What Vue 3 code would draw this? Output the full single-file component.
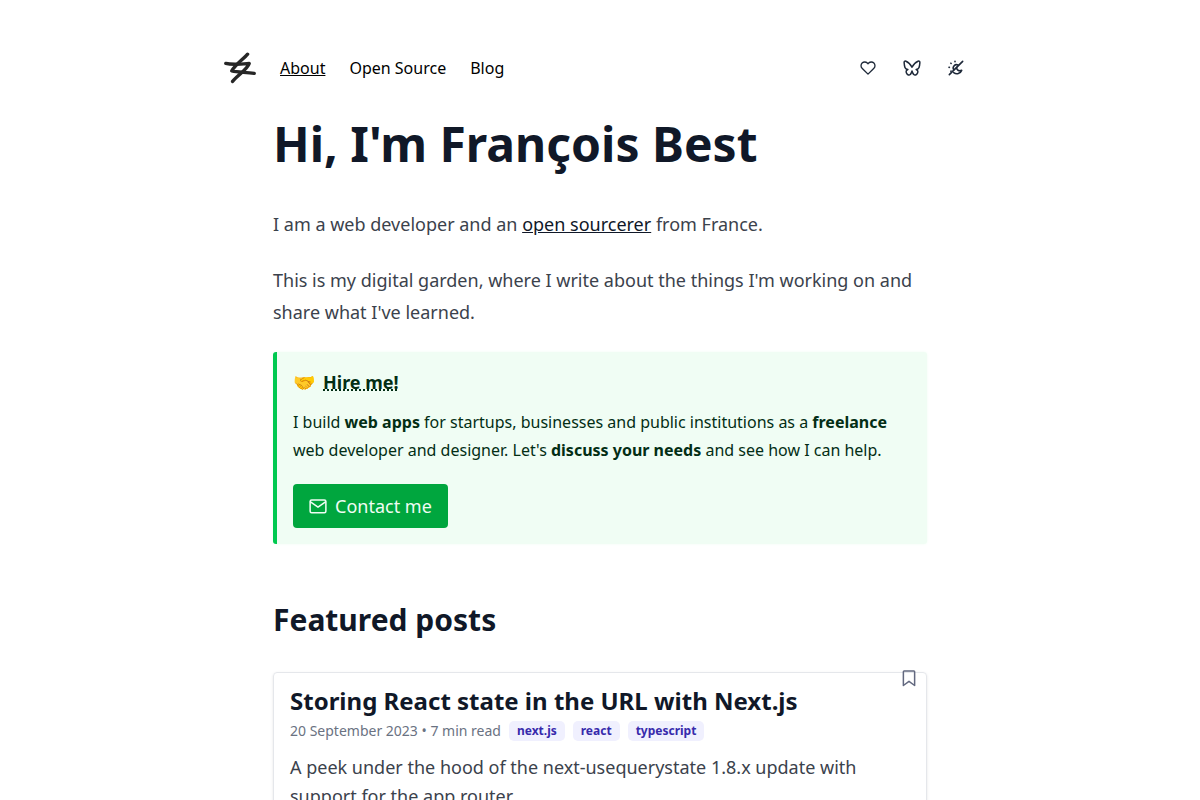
<script setup>
const links = [
  { label: 'About', href: '#about', active: true },
  { label: 'Open Source', href: '#open-source', active: false },
  { label: 'Blog', href: '#blog', active: false },
]
const post = {
  title: 'Storing React state in the URL with Next.js',
  meta: '20 September 2023 • 7 min read',
  tags: ['next.js', 'react', 'typescript'],
  summary: 'A peek under the hood of the next-usequerystate 1.8.x update with support for the app router.',
}
</script>

<template>
  <div class="page">
    <header class="header">
      <a class="logo" href="#home" aria-label="Home">
        <svg viewBox="0 0 32 32" width="32" height="32" fill="none" stroke="#262626" stroke-width="3.400" stroke-linecap="round" stroke-linejoin="round">
          <path d="M1.800 11.400C8 13 16 12.200 25.200 11.500C23.500 17 14.500 22.600 8.600 29.400" />
          <path d="M23.600 2.200C19.500 7 11.500 12.500 7.800 18.900C14 20.600 22 20 30.200 21.400" />
        </svg>
      </a>
      <nav class="nav">
        <a v-for="l in links" :key="l.label" :href="l.href" :class="{ active: l.active }">{{ l.label }}</a>
      </nav>
      <div class="actions">
        <a href="#sponsor" aria-label="Sponsor">
          <svg class="icon" viewBox="0 0 24 24" width="16" height="16">
            <path d="M20.840 4.610a5.500 5.500 0 0 0-7.780 0L12 5.670l-1.060-1.060a5.500 5.500 0 0 0-7.780 7.780l1.060 1.060L12 21.230l7.780-7.780 1.060-1.060a5.500 5.500 0 0 0 0-7.780z" />
          </svg>
        </a>
        <a href="#bluesky" aria-label="Bluesky">
          <svg class="icon" viewBox="0 0 24 24" width="18" height="18">
            <path d="M12 11C10.500 8 7 4.200 4 3C2.300 2.400 1.400 3.300 1.500 5C1.700 7.500 2 9.500 2.600 11.300C3.200 13 4.600 13.800 6.500 14C4.200 14.800 3.600 16.800 4.700 18.800C6 21.300 8.300 22.200 9.800 20.500C11 19.200 11.500 17.500 12 16C12.500 17.500 13 19.200 14.200 20.500C15.700 22.200 18 21.300 19.300 18.800C20.400 16.800 19.800 14.800 17.500 14C19.400 13.800 20.800 13 21.400 11.300C22 9.500 22.300 7.500 22.500 5C22.600 3.300 21.700 2.400 20 3C17 4.200 13.500 8 12 11Z" />
          </svg>
        </a>
        <button type="button" aria-label="Toggle theme">
          <svg class="icon theme" viewBox="0 0 24 24" width="16" height="16">
            <path d="M22 2L2 22" />
            <path d="M15 7.500A5 5 0 0 0 8.500 14.500" />
            <path d="M10.500 2v.6M4.300 4.800l.4.4M1.500 11h.6M4.300 16.800l.3-.3" />
            <path d="M13 11.500C12.800 15 16 17 20.500 15.500C18.500 20.500 13 22 8.500 19" />
          </svg>
        </button>
      </div>
    </header>

    <main class="content">
      <h1>Hi, I'm François Best</h1>
      <p>I am a web developer and an <a href="#open-source">open sourcerer</a> from France.</p>
      <p>This is my digital garden, where I write about the things I'm working on and share what I've learned.</p>

      <section class="callout">
        <h3><span class="emoji" aria-hidden="true">🤝</span><a href="#hire">Hire me!</a></h3>
        <p>I build <strong>web apps</strong> for startups, businesses and public institutions as a <strong>freelance</strong> web developer and designer. Let's <strong>discuss your needs</strong> and see how I can help.</p>
        <a class="contact" href="#contact">
          <svg class="icon" viewBox="0 0 24 24" width="18" height="18">
            <rect x="1.500" y="4" width="21" height="17" rx="2" />
            <path d="M22 6.500L12 13.500L2 6.500" />
          </svg>
          Contact me
        </a>
      </section>

      <h2>Featured posts</h2>
      <article class="card">
        <svg class="icon bookmark" viewBox="0 0 24 24" width="18" height="18">
          <path d="M19.500 22l-7.500-5.500L4.500 22V3.500a1 1 0 0 1 1-1h13a1 1 0 0 1 1 1z" />
        </svg>
        <h3>{{ post.title }}</h3>
        <div class="meta">
          <span>{{ post.meta }}</span>
          <ul>
            <li v-for="t in post.tags" :key="t">{{ t }}</li>
          </ul>
        </div>
        <p>{{ post.summary }}</p>
      </article>
    </main>
  </div>
</template>

<style>
body {
  background: #fff;
}
html {
  scrollbar-width: none;
}
</style>

<style scoped>
.page {
  font-family: "Noto Sans", sans-serif;
  font-size: 18px;
  line-height: 32px;
  color: #3b424c;
  padding: 48px 16px;
}
.icon {
  display: block;
  fill: none;
  stroke: currentColor;
  stroke-width: 2;
  stroke-linecap: round;
  stroke-linejoin: round;
}
.theme {
  stroke-width: 2.4;
}
.header {
  display: flex;
  align-items: center;
  gap: 24px;
  height: 40px;
  max-width: 752px;
  margin: 0 auto;
}
.logo svg {
  display: block;
}
.nav {
  display: flex;
  gap: 24px;
  font-size: 16px;
  line-height: 24px;
}
.nav a {
  color: #000;
  text-decoration: none;
}
.nav a.active {
  text-decoration: underline;
}
.actions {
  display: flex;
  gap: 4px;
  margin-left: auto;
}
.actions a,
.actions button {
  display: grid;
  place-items: center;
  width: 40px;
  height: 40px;
  padding: 0;
  border: 0;
  background: none;
  color: #1e2939;
}
.content {
  max-width: 654px;
  margin: 32px auto 0;
}
h1,
h2,
h3,
p {
  margin: 0;
}
h1 {
  font-size: 48px;
  line-height: 48px;
  font-weight: 700;
  color: #101828;
  margin-bottom: 40px;
}
.content > p {
  margin-bottom: 24px;
}
.content > p a {
  color: #101828;
}
.callout {
  padding: 16px;
  border-left: 4px solid #00c950;
  border-radius: 3px;
  background: #f0fdf4;
  box-shadow: 0 0 3px #f0fdf4;
  color: #032e15;
}
.callout h3 {
  display: flex;
  gap: 8px;
  font-size: 18px;
  line-height: 28px;
  font-weight: 700;
  margin-bottom: 12px;
}
.callout h3 a {
  color: inherit;
  text-decoration: underline dotted;
}
.callout p {
  font-size: 16px;
  line-height: 28px;
  margin-bottom: 20px;
}
.contact {
  display: flex;
  align-items: center;
  gap: 8px;
  width: fit-content;
  height: 44px;
  padding: 0 16px;
  border-radius: 4px;
  background: #00a63e;
  color: #f0fdf4;
  text-decoration: none;
}
h2 {
  font-size: 30px;
  line-height: 40px;
  font-weight: 700;
  color: #101828;
  margin: 56px 0 32px;
}
.card {
  position: relative;
  padding: 12px 16px 16px;
  border: 1px solid #e5e7eb;
  border-radius: 4px;
  box-shadow: 0 1px 3px rgba(0, 0, 0, 0.1);
}
.bookmark {
  position: absolute;
  top: -4px;
  right: 8px;
  color: #62687f;
}
.card h3 {
  font-size: 24px;
  line-height: 32px;
  font-weight: 700;
  color: #101828;
}
.meta {
  display: flex;
  align-items: center;
  gap: 8px;
  margin: 4px 0 12px;
  font-size: 14px;
  line-height: 20px;
  color: #6a7282;
}
.meta ul {
  display: flex;
  gap: 8px;
  margin: 0;
  padding: 0;
  list-style: none;
}
.meta li {
  padding: 0 8px;
  border-radius: 5px;
  background: #f0f0fe;
  color: #372aac;
  font-size: 12px;
  font-weight: 700;
}
.card p {
  line-height: 29px;
}
</style>
